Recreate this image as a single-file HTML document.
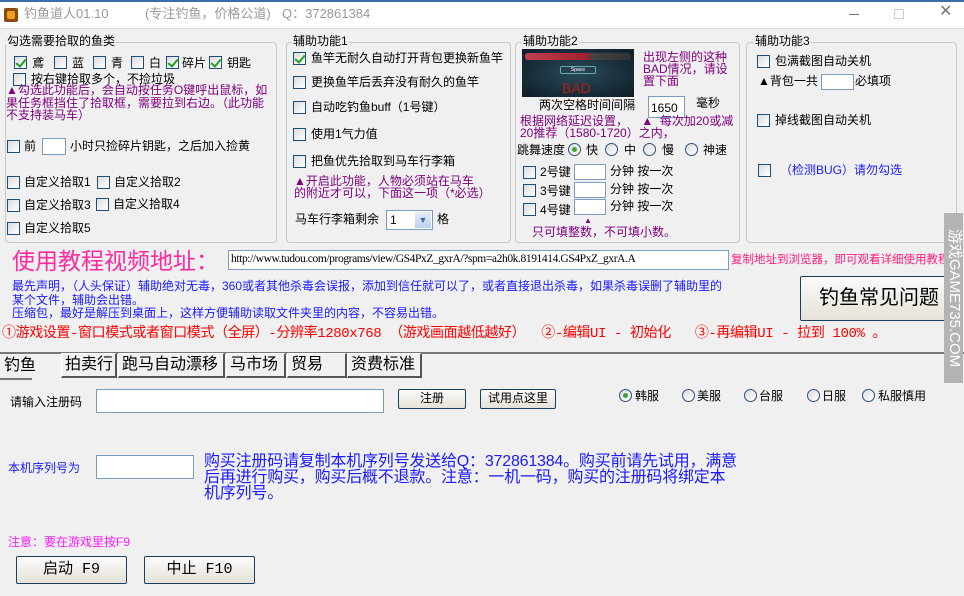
<!DOCTYPE html>
<html><head><meta charset="utf-8"><style>
*{margin:0;padding:0;box-sizing:border-box}
body{width:964px;height:596px;overflow:hidden;background:#f0f0f0;font-family:"Liberation Sans","Noto Sans CJK SC",sans-serif;font-size:12px;color:#000;position:relative}
.a{position:absolute;white-space:nowrap;line-height:14px}
.cb{position:absolute;width:13px;height:13px;border:1px solid #1c4f7c;background:linear-gradient(135deg,#dcdcdc,#fff)}
.cb.on::after{content:"";position:absolute;left:3px;top:0px;width:4px;height:8px;border:solid #21a121;border-width:0 2px 2px 0;transform:rotate(40deg)}
.rb{position:absolute;width:13px;height:13px;border:1px solid #2b4f7c;border-radius:50%;background:linear-gradient(135deg,#dcdcdc,#fff)}
.rb.on::after{content:"";position:absolute;left:3px;top:3px;width:5px;height:5px;border-radius:50%;background:#3aa63a}
.in{position:absolute;background:#fff;border:1px solid #7a9cc0}
.g{position:absolute;border:1px solid #c8c8c8;border-radius:4px}
.gt{position:absolute;background:#f0f0f0;padding:0 1px;line-height:14px}
.p{color:#800080}
.btn{position:absolute;border:1px solid #1b3f63;border-radius:2px;background:linear-gradient(#fafafa,#e6e2d8);text-align:center;font-family:"Liberation Mono","Noto Sans CJK SC",monospace}
.tab{position:absolute;top:353px;height:25px;border:1px solid #888;border-top:1px solid #fff;border-left:1px solid #fff;border-right:2px solid #555;border-bottom:2px solid #555;font-size:16px;line-height:22px;padding-left:3px;background:#f0f0f0;white-space:nowrap;overflow:hidden}
</style></head><body>
<div style="position:absolute;left:0;top:0;width:964px;height:2px;background:#3b6ea5"></div>
<div style="position:absolute;left:0;top:2px;width:964px;height:27px;background:#fff;border-bottom:1px solid #ddd"></div>
<div style="position:absolute;left:4px;top:8px;width:14px;height:14px;background:#8a4a10;border-radius:2px"><div style="margin:3px;width:8px;height:8px;background:#f0a020;border-radius:2px"></div></div>
<div class="a" style="left:24px;top:7px;color:#999;font-size:13px">钓鱼道人01.10</div>
<div class="a" style="left:145px;top:7px;color:#999;font-size:13px">(专注钓鱼，价格公道)</div>
<div class="a" style="left:282px;top:7px;color:#999;font-size:13px">Q：372861384</div>
<div style="position:absolute;left:849px;top:14px;width:10px;height:1px;background:#777"></div>
<div style="position:absolute;left:894px;top:9px;width:10px;height:10px;border:1px solid #ccc"></div>
<div class="a" style="left:939px;top:5px;color:#777;font-size:16px">✕</div>

<!-- group 1 -->
<div class="g" style="left:5px;top:42px;width:272px;height:201px"></div>
<div class="gt" style="left:6px;top:34px">勾选需要拾取的鱼类</div>
<div class="cb on" style="left:14px;top:56px"></div><div class="a" style="left:32px;top:56px">鳶</div>
<div class="cb" style="left:54px;top:56px"></div><div class="a" style="left:72px;top:56px">蓝</div>
<div class="cb" style="left:93px;top:56px"></div><div class="a" style="left:111px;top:56px">青</div>
<div class="cb" style="left:131px;top:56px"></div><div class="a" style="left:149px;top:56px">白</div>
<div class="cb on" style="left:166px;top:56px"></div><div class="a" style="left:182px;top:56px">碎片</div>
<div class="cb on" style="left:209px;top:56px"></div><div class="a" style="left:227px;top:56px">钥匙</div>
<div class="cb" style="left:13px;top:73px"></div><div class="a" style="left:31px;top:72px">按右键拾取多个，不捡垃圾</div>
<div class="a p" style="left:6px;top:84px;line-height:12.5px">▲勾选此功能后，会自动按任务O键呼出鼠标，如<br>果任务框挡住了拾取框，需要拉到右边。（此功能<br>不支持装马车）</div>
<div class="cb" style="left:7px;top:140px"></div><div class="a" style="left:24px;top:139px">前</div>
<div class="in" style="left:42px;top:138px;width:24px;height:17px"></div>
<div class="a" style="left:70px;top:139px">小时只捡碎片钥匙，之后加入捡黄</div>
<div class="cb" style="left:7px;top:176px"></div><div class="a" style="left:24px;top:175px">自定义拾取1</div>
<div class="cb" style="left:97px;top:176px"></div><div class="a" style="left:114px;top:175px">自定义拾取2</div>
<div class="cb" style="left:7px;top:199px"></div><div class="a" style="left:24px;top:198px">自定义拾取3</div>
<div class="cb" style="left:96px;top:198px"></div><div class="a" style="left:113px;top:197px">自定义拾取4</div>
<div class="cb" style="left:7px;top:222px"></div><div class="a" style="left:24px;top:221px">自定义拾取5</div>

<!-- group 2 -->
<div class="g" style="left:286px;top:42px;width:225px;height:201px"></div>
<div class="gt" style="left:292px;top:34px">辅助功能1</div>
<div class="cb on" style="left:293px;top:52px"></div><div class="a" style="left:311px;top:51px">鱼竿无耐久自动打开背包更换新鱼竿</div>
<div class="cb" style="left:293px;top:76px"></div><div class="a" style="left:311px;top:75px">更换鱼竿后丢弃没有耐久的鱼竿</div>
<div class="cb" style="left:293px;top:101px"></div><div class="a" style="left:311px;top:100px">自动吃钓鱼buff（1号键）</div>
<div class="cb" style="left:293px;top:128px"></div><div class="a" style="left:311px;top:127px">使用1气力值</div>
<div class="cb" style="left:293px;top:155px"></div><div class="a" style="left:311px;top:154px">把鱼优先拾取到马车行李箱</div>
<div class="a p" style="left:294px;top:176px;line-height:11.5px">▲开启此功能，人物必须站在马车<br>的附近才可以，下面这一项（*必选）</div>
<div class="a" style="left:295px;top:212px">马车行李箱剩余</div>
<div class="in" style="left:386px;top:210px;width:47px;height:20px;font-size:12px;padding:2px 3px">1<div style="position:absolute;right:1px;top:1px;width:16px;height:16px;background:linear-gradient(#e4eefa,#b9d0ee);font-size:9px;color:#4a6a9a;text-align:center;line-height:16px">▼</div></div>
<div class="a" style="left:437px;top:212px">格</div>

<!-- group 3 -->
<div class="g" style="left:515px;top:42px;width:225px;height:201px"></div>
<div class="gt" style="left:522px;top:34px">辅助功能2</div>
<div style="position:absolute;left:522px;top:49px;width:112px;height:48px;background:radial-gradient(#2a4a5a,#0e1c26)">
<div style="position:absolute;left:3px;top:4px;width:106px;height:7px;background:linear-gradient(90deg,#c04050,#a02030 60%,#444 62%,#333);border-radius:3px"></div>
<div style="position:absolute;left:38px;top:17px;width:36px;height:8px;border:1px solid #6aa;border-radius:2px;font-size:5px;color:#fff;text-align:center;line-height:6px">Space</div>
<div style="position:absolute;left:40px;top:31px;font-size:14px;color:#b02020;line-height:16px">BAD</div></div>
<div class="a p" style="left:643px;top:51px;line-height:12px">出现左侧的这种<br>BAD情况，请设<br>置下面</div>
<div class="a" style="left:539px;top:98px">两次空格时间间隔</div>
<div class="in" style="left:648px;top:96px;width:37px;height:22px;font-size:12px;padding:4px 2px">1650</div>
<div class="a" style="left:696px;top:96px">毫秒</div>
<div class="a p" style="left:520px;top:115px;line-height:12px">根据网络延迟设置，&nbsp;&nbsp;&nbsp;&nbsp;▲&nbsp;&nbsp;每次加20或减<br>20推荐（1580-1720）之内，</div>
<div class="a" style="left:517px;top:143px">跳舞速度</div>
<div class="rb on" style="left:568px;top:143px"></div><div class="a" style="left:586px;top:143px">快</div>
<div class="rb" style="left:605px;top:143px"></div><div class="a" style="left:624px;top:143px">中</div>
<div class="rb" style="left:643px;top:143px"></div><div class="a" style="left:662px;top:143px">慢</div>
<div class="rb" style="left:685px;top:143px"></div><div class="a" style="left:703px;top:143px">神速</div>
<div class="cb" style="left:523px;top:166px"></div><div class="a" style="left:540px;top:165px">2号键</div><div class="in" style="left:574px;top:164px;width:32px;height:16px"></div><div class="a" style="left:610px;top:164px">分钟 按一次</div>
<div class="cb" style="left:523px;top:184px"></div><div class="a" style="left:540px;top:184px">3号键</div><div class="in" style="left:574px;top:182px;width:32px;height:16px"></div><div class="a" style="left:610px;top:182px">分钟 按一次</div>
<div class="cb" style="left:523px;top:203px"></div><div class="a" style="left:540px;top:203px">4号键</div><div class="in" style="left:574px;top:199px;width:32px;height:16px"></div><div class="a p" style="left:584px;top:214px;font-size:8px">▲</div><div class="a" style="left:610px;top:199px">分钟 按一次</div>
<div class="a p" style="left:532px;top:225px">只可填整数，不可填小数。</div>

<!-- group 4 -->
<div class="g" style="left:746px;top:42px;width:211px;height:201px"></div>
<div class="gt" style="left:754px;top:34px">辅助功能3</div>
<div class="cb" style="left:757px;top:55px"></div><div class="a" style="left:775px;top:54px">包满截图自动关机</div>
<div class="a" style="left:758px;top:74px">▲背包一共</div><div class="in" style="left:821px;top:74px;width:33px;height:16px"></div><div class="a" style="left:855px;top:74px">必填项</div>
<div class="cb" style="left:757px;top:114px"></div><div class="a" style="left:775px;top:113px">掉线截图自动关机</div>
<div class="cb" style="left:758px;top:164px"></div><div class="a" style="left:780px;top:163px;color:#1a1aff">（检测BUG）请勿勾选</div>

<div class="a" style="left:12px;top:248px;font-size:23px;line-height:26px;color:#ff2aa0">使用教程视频地址：</div>
<div class="in" style="left:228px;top:250px;width:501px;height:20px;font-family:'Liberation Serif',serif;font-size:11.5px;padding:2px 2px;letter-spacing:-0.4px;overflow:hidden;white-space:nowrap">http://www.tudou.com/programs/view/GS4PxZ_gxrA/?spm=a2h0k.8191414.GS4PxZ_gxrA.A</div>
<div class="a" style="left:731px;top:253px;font-size:11.5px;color:#ff1a7a">复制地址到浏览器，即可观看详细使用教程</div>
<div class="a" style="left:12px;top:280px;font-size:12px;color:#1a1aff;line-height:13.5px">最先声明，（人头保证）辅助绝对无毒，360或者其他杀毒会误报，添加到信任就可以了，或者直接退出杀毒，如果杀毒误删了辅助里的<br>某个文件，辅助会出错。<br>压缩包，最好是解压到桌面上，这样方便辅助读取文件夹里的内容，不容易出错。</div>
<div class="btn" style="left:800px;top:276px;width:158px;height:45px;font-size:20px;line-height:43px;font-family:'Liberation Sans','Noto Sans CJK SC',sans-serif">钓鱼常见问题</div>
<div class="a" style="left:2px;top:326px;font-size:14px;line-height:16px;color:#ff0000;font-family:'Liberation Mono','Noto Sans CJK SC',monospace;letter-spacing:-0.4px">①游戏设置-窗口模式或者窗口模式（全屏）-分辨率1280x768 （游戏画面越低越好） &nbsp;②-编辑UI - 初始化 &nbsp;&nbsp;③-再编辑UI - 拉到 100% 。</div>

<div style="position:absolute;left:0;top:352px;width:964px;height:2px;background:#777"></div>
<div class="a" style="left:4px;top:356px;font-size:16px;line-height:20px">钓鱼</div>
<div style="position:absolute;left:0;top:378px;width:32px;height:2px;background:#777"></div>
<div class="tab" style="left:61px;width:56px">拍卖行</div>
<div class="tab" style="left:118px;width:107px">跑马自动漂移</div>
<div class="tab" style="left:226px;width:60px">马市场</div>
<div class="tab" style="left:287px;width:60px">贸易</div>
<div class="tab" style="left:347px;width:75px">资费标准</div>

<div class="a" style="left:10px;top:395px;font-size:12px">请输入注册码</div>
<div class="in" style="left:96px;top:389px;width:288px;height:24px"></div>
<div class="btn" style="left:398px;top:389px;width:68px;height:20px;font-size:12px;line-height:18px">注册</div>
<div class="btn" style="left:480px;top:389px;width:76px;height:20px;font-size:12px;line-height:18px">试用点这里</div>
<div class="rb on" style="left:619px;top:389px"></div><div class="a" style="left:635px;top:389px;font-size:12px">韩服</div>
<div class="rb" style="left:682px;top:389px"></div><div class="a" style="left:697px;top:389px;font-size:12px">美服</div>
<div class="rb" style="left:744px;top:389px"></div><div class="a" style="left:759px;top:389px;font-size:12px">台服</div>
<div class="rb" style="left:807px;top:389px"></div><div class="a" style="left:822px;top:389px;font-size:12px">日服</div>
<div class="rb" style="left:862px;top:389px"></div><div class="a" style="left:878px;top:389px;font-size:12px">私服慎用</div>

<div class="a" style="left:8px;top:461px;font-size:12px;color:#1a1aff">本机序列号为</div>
<div class="in" style="left:96px;top:455px;width:98px;height:24px"></div>
<div class="a" style="left:204px;top:454px;font-size:16px;line-height:16px;color:#1a1aff;letter-spacing:-0.2px">购买注册码请复制本机序列号发送给Q：372861384。购买前请先试用，满意<br>后再进行购买，购买后概不退款。注意：一机一码，购买的注册码将绑定本<br>机序列号。</div>
<div class="a" style="left:8px;top:535px;font-size:12px;color:#ff1aff">注意：要在游戏里按F9</div>
<div class="btn" style="left:16px;top:556px;width:111px;height:28px;font-size:15px;line-height:26px">启动 F9</div>
<div class="btn" style="left:144px;top:556px;width:111px;height:28px;font-size:15px;line-height:26px">中止 F10</div>

<div style="position:absolute;left:944px;top:213px;width:19px;height:170px;background:#b4b4b4"></div>
<div class="a" style="left:954px;top:298px;transform:translate(-50%,-50%) rotate(90deg);color:#fff;font-size:15px;line-height:18px">游戏GAME735.COM</div>
</body></html>
